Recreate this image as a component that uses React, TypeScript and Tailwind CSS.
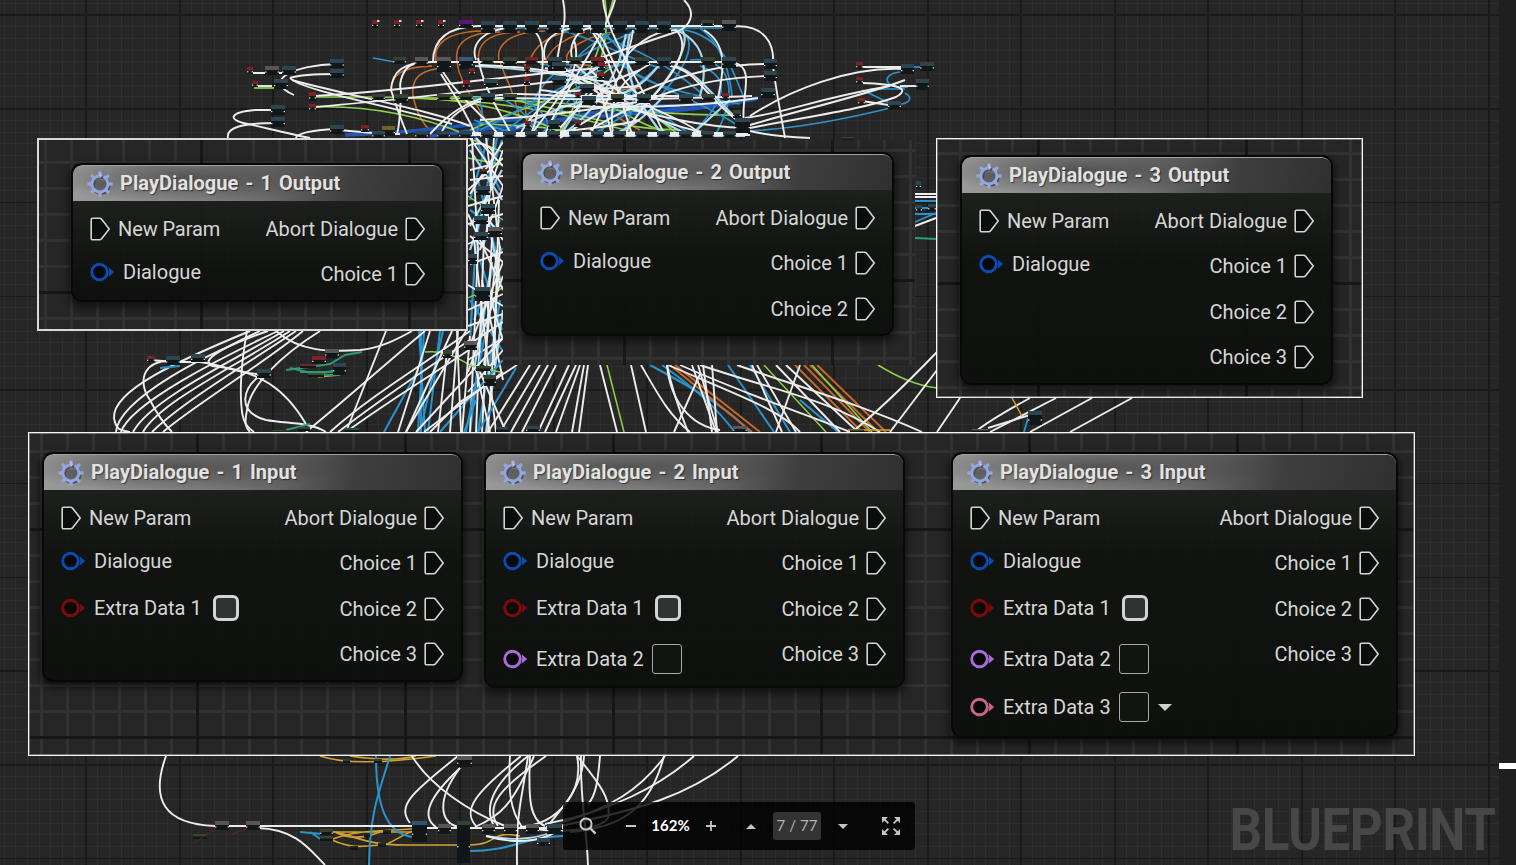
import React from "react";

type Wire = { c: string; w?: number; d: string[] };

const WHITE = "#ededed";
const BLUE = "#2a93cc";
const LIGHT = "#a9d9ee";
const ORANGE = "#c8692a";
const LIME = "#8fd04a";
const YELLOW = "#d3a32f";
const NAVY = "#1f55b5";
const TEAL = "#2f9a76";

const upperWires: Wire[] = [
  {
    c: ORANGE, w: 1.5,
    d: [
      "M436 62 C433 44 446 32 482 31", "M457 62 C454 44 466 32 500 32", "M479 62 C476 46 486 32 520 32",
      "M499 60 C496 46 508 32 545 31", "M530 60 C536 44 550 36 566 32", "M545 62 C552 46 566 38 585 32",
      "M391 92 C391 74 402 67 432 66", "M413 96 C411 78 420 69 446 68", "M457 62 C460 84 472 95 490 128",
      "M500 62 C506 80 514 90 520 120", "M413 96 C416 110 422 124 432 132", "M525 64 C528 84 522 100 528 128",
      "M540 64 L620 66", "M560 130 C580 100 600 90 640 88", "M568 62 C560 50 590 34 620 31", "M600 64 C590 96 600 110 640 130",
    ],
  },
  {
    c: NAVY, w: 3.5,
    d: ["M345 135 C420 132 460 126 520 119", "M430 136 C520 124 590 116 690 108 L756 99", "M470 136 C560 124 600 104 680 106", "M580 118 C640 112 700 112 758 98"],
  },
  {
    c: LIME, w: 1.7,
    d: [
      "M313 97 H378 C420 98 520 98 590 106", "M313 107 C370 105 420 116 465 134", "M405 98 C500 100 560 112 640 134",
      "M605 0 C610 40 600 60 590 100", "M420 98 C470 100 520 112 560 132", "M600 110 C640 110 680 116 740 115",
      "M450 97 C540 92 580 128 680 130", "M580 96 C620 104 640 130 680 134", "M613 0 C605 30 596 66 560 134",
      "M252 73 H285", "M254 88 H275", "M470 130 C540 100 590 90 620 60", "M650 112 L680 136", "M480 124 C540 126 570 130 600 136",
    ],
  },
  {
    c: BLUE, w: 1.7,
    d: [
      "M373 58 L395 62", "M560 30 C600 40 620 56 660 68", "M590 32 C640 50 670 66 700 92", "M610 34 C560 60 560 84 580 110",
      "M660 28 C720 26 730 64 744 98", "M675 30 C700 34 690 64 660 96", "M700 28 C722 44 730 74 732 96",
      "M660 64 C640 84 620 96 600 134", "M690 60 C730 56 740 90 716 134", "M620 64 C660 90 700 100 745 130",
      "M470 96 C490 104 480 120 476 136", "M520 98 C545 110 548 120 552 136", "M500 98 C520 106 530 120 540 136",
      "M560 62 C590 92 580 120 570 136", "M480 130 C560 90 600 60 650 62", "M600 30 C640 60 640 110 620 136",
      "M900 72 C880 74 884 90 908 87", "M862 90 C880 98 890 104 898 106", "M905 93 C915 98 908 105 896 104",
      "M750 131 C800 128 850 118 890 108", "M540 64 C600 70 640 100 690 134", "M640 30 C560 60 540 80 530 110",
      "M700 66 C740 80 716 110 690 136", "M590 66 C560 96 520 116 500 136", "M632 32 C590 70 660 90 740 104",
      "M484 28 H735", "M470 98 H640", "M600 62 L540 136", "M650 100 L590 136", "M474 120 L520 136", "M900 67 H930", "M870 89 H905",
    ],
  },
  {
    c: LIGHT, w: 2.2,
    d: [
      "M475 66 C530 68 560 76 600 80", "M676 30 C700 40 710 60 700 96", "M630 34 C620 70 636 100 662 134",
      "M676 66 C700 74 712 96 740 122", "M682 30 C690 40 680 70 640 110", "M560 136 C600 110 620 70 626 34",
      "M575 64 C600 90 640 110 690 136", "M480 136 H745", "M590 88 L560 136", "M604 100 C640 90 650 76 660 64", "M516 128 L560 108 L600 96",
      "M610 136 C640 124 650 110 664 96", "M730 100 L690 136",
    ],
  },
  {
    c: WHITE, w: 1.9,
    d: [
      "M563 0 C568 24 560 36 557 62", "M603 0 C606 34 640 80 664 134", "M615 0 C606 34 570 80 545 134",
      "M684 0 C696 12 692 26 676 32 C640 44 610 54 590 62", "M728 27 C765 22 775 44 773 66 C776 90 780 110 785 138",
      "M433 62 C433 40 446 27 478 26 H728", "M476 60 C470 44 484 29 510 28", "M438 62 C450 90 478 110 500 136",
      "M478 58 C484 90 500 112 512 136", "M391 90 C392 72 402 62 432 62 H730", "M401 92 C398 82 404 66 414 64",
      "M391 90 C398 112 402 122 407 134", "M401 92 C400 112 400 124 397 134", "M441 74 C456 98 466 112 476 136",
      "M530 28 C546 36 544 62 540 90 C538 112 536 124 530 136", "M545 60 C540 40 556 28 580 28", "M573 60 C568 50 574 30 590 28 C612 60 620 100 632 134",
      "M574 40 C584 70 560 96 530 136", "M592 32 C610 34 606 70 640 96", "M676 30 C650 30 630 50 622 62",
      "M676 30 C690 44 680 68 650 100 C636 116 630 124 624 136", "M633 30 C628 70 600 110 590 136", "M704 30 C728 44 724 70 718 98",
      "M472 62 H600", "M480 65 C560 68 580 80 610 82", "M610 60 C580 80 540 98 520 134",
      "M314 96 C420 90 500 76 600 68", "M314 107 C400 100 500 88 600 76", "M294 95 C260 80 296 65 336 64",
      "M290 78 C296 76 310 74 336 74", "M290 78 C300 90 390 106 452 124", "M292 80 C350 96 430 110 470 126",
      "M277 110 H255 C230 112 226 120 248 124 C270 129 290 134 310 138", "M277 123 C240 123 226 128 228 138", "M336 129 C310 130 296 134 296 138",
      "M340 130 C360 132 380 134 400 134", "M430 134 C470 90 500 92 560 96 H690", "M440 136 C450 110 480 96 510 98",
      "M560 138 C600 110 680 62 770 64", "M590 130 C640 100 690 78 768 76", "M500 98 C600 100 640 100 752 96",
      "M560 106 C620 108 690 108 758 98", "M735 63 C756 68 740 100 744 122", "M670 66 C698 70 706 100 745 126",
      "M480 120 C550 116 590 110 650 100", "M540 90 C600 96 670 126 745 128", "M560 66 C600 90 660 130 720 134",
      "M545 68 C580 76 610 88 630 110", "M614 138 C606 100 620 80 650 64", "M700 134 C690 120 620 100 590 70",
      "M750 116 C790 90 850 66 905 69", "M750 125 C800 110 870 94 905 80", "M750 128 C810 116 860 110 896 97 C912 88 896 84 862 83",
      "M862 67 H905", "M862 101 L895 106", "M900 86 H920", "M745 118 C790 112 810 100 890 86",
      "M750 131 C770 136 790 137 810 138", "M640 120 C600 130 560 130 520 136", "M470 135 H750", "M590 90 L640 70", "M598 86 L560 128", "M600 88 L612 136",
      "M252 73 H285", "M254 86 H272", "M575 82 L630 98", "M470 133 H748", "M574 78 L600 94 L574 108", "M560 92 L640 86",
    ],
  },
];

const stripWires: Wire[] = [
  {
    c: BLUE, w: 2.2,
    d: [
      "M488 138 L470 200", "M497 138 L476 240 L470 340", "M475 138 L500 190", "M500 220 L470 262", "M478 180 L498 260", "M502 248 L474 320",
      "M486 300 L470 432", "M500 300 L478 432", "M470 210 L502 232", "M480 260 L502 330", "M470 300 L502 350", "M492 170 L502 140",
    ],
  },
  { c: LIME, w: 1.4, d: ["M468 138 L503 152", "M468 158 L503 165", "M468 298 C480 290 496 298 503 286", "M468 196 L503 220"] },
  { c: LIGHT, w: 2.2, d: ["M470 150 L502 200", "M502 170 L470 226", "M484 200 L500 280", "M492 262 L474 370", "M503 310 L486 432", "M470 250 L490 190"] },
  {
    c: WHITE, w: 1.9,
    d: [
      "M468 146 C482 138 502 150 490 165 L470 170", "M503 142 L470 194", "M470 138 L503 186", "M470 180 L503 176", "M503 150 L482 210 L503 240",
      "M468 206 L503 196", "M468 224 L503 214", "M470 236 L503 262", "M470 264 L503 252", "M478 250 L470 432", "M484 240 L476 432", "M492 238 L482 432",
      "M500 246 L488 432", "M503 262 L468 350", "M503 276 L468 372", "M468 285 L503 306", "M468 310 L503 294", "M468 326 L503 314", "M474 240 L496 432",
      "M482 280 L503 380", "M468 345 L503 322", "M468 360 L503 338", "M472 138 L478 250", "M494 138 L486 240", "M499 200 L494 365", "M503 350 L468 392", "M486 138 L500 250", "M468 214 L503 290",
      "M468 190 L503 158", "M468 244 L503 228", "M476 138 L503 166", "M503 186 L480 250", "M497 250 L484 365", "M488 290 L503 340",
    ],
  },
];

const lowerWires: Wire[] = [
  {
    c: BLUE, w: 2,
    d: [
      "M419 331 L425 432", "M424 331 L418 432", "M440 331 L428 432", "M443 331 L420 432", "M418 370 L384 432", "M484 340 L466 432", "M516 368 L478 432", "M476 400 L464 432",
      "M650 365 C700 392 730 410 750 432", "M662 365 C700 392 716 408 735 432", "M728 365 L774 432", "M750 365 L790 432", "M503 360 L440 432", "M800 400 L838 432", "M421 331 L421 432",
    ],
  },
  { c: ORANGE, w: 1.8, d: ["M670 365 L752 432", "M675 365 L760 432", "M804 365 L870 432", "M810 365 L878 432", "M817 365 L886 432", "M795 365 L862 432"] },
  { c: LIME, w: 1.5, d: ["M607 365 L624 432", "M878 365 C896 376 914 385 937 388", "M764 365 L826 432", "M812 365 L872 432", "M425 352 C448 350 456 358 472 366 L500 372"] },
  {
    c: WHITE, w: 1.9,
    d: [
      "M250 331 C180 360 112 390 114 418 C116 430 120 430 130 432", "M268 331 C210 350 118 400 116 432", "M278 331 C220 358 130 404 121 432", "M284 331 C230 362 150 400 133 432",
      "M290 331 C236 366 160 402 143 432", "M296 331 C250 362 182 402 152 432", "M303 331 C260 366 196 404 163 432", "M320 331 C280 356 250 386 247 410 C244 424 246 428 250 432",
      "M180 362 C144 356 136 380 150 400 C156 412 164 424 172 432", "M150 360 L175 362 H200 C220 364 238 374 260 374",
      "M260 331 C220 350 200 360 212 366 C260 370 286 390 306 424", "M247 331 C240 370 240 396 242 412 C244 424 248 428 254 432", "M262 374 C242 388 236 412 266 420 C290 424 310 422 326 432",
      "M276 331 C300 352 330 352 360 350 C380 348 396 340 412 331", "M386 331 L346 432", "M425 331 C390 360 350 396 306 432", "M470 331 C430 360 370 396 330 432",
      "M470 340 C430 366 380 400 338 432", "M475 346 C430 376 390 400 346 432", "M430 331 L398 432", "M452 331 L406 432", "M466 331 L406 432",
      "M447 352 L438 432", "M458 331 L450 432", "M457 331 L461 432", "M470 336 L462 432", "M503 338 L416 432", "M503 372 L424 432", "M476 370 L490 432", "M480 372 L506 432",
      "M517 365 L460 402 L430 432", "M530 365 L488 432", "M540 365 L500 432", "M548 365 L511 432", "M556 365 L522 432", "M569 365 L538 432", "M576 365 L545 432", "M580 365 L556 432", "M584 365 L572 432",
      "M588 365 L579 432", "M600 365 L617 432", "M631 365 L646 432", "M641 365 C660 398 670 416 690 432", "M667 365 C670 400 690 426 720 430", "M667 365 C672 390 680 412 688 432", "M692 365 L716 432", "M698 365 L718 432",
      "M703 365 L712 432", "M712 365 L717 432", "M700 374 L674 432", "M668 365 C740 396 780 410 800 432", "M680 365 C760 400 800 412 850 432", "M700 365 C780 392 830 400 880 432",
      "M752 365 L782 432", "M757 365 L796 432", "M776 365 L840 432", "M786 365 L858 432", "M800 365 L776 432", "M737 365 C790 384 860 404 922 432", "M937 352 C910 380 880 410 852 432", "M937 370 L890 432",
      "M960 398 L937 432", "M1030 398 C1008 410 990 420 975 432", "M1056 398 L990 432", "M1092 398 L1030 432", "M1132 398 L1070 432", "M988 428 L1030 415",
      "M915 194 H936 M915 197 H936", "M915 226 L936 218",
    ],
  },
  { c: BLUE, w: 1.8, d: ["M160 368 L180 366", "M915 201 H936 M915 208 H936 M915 214 H936 M915 222 L936 213", "M1028 418 L1024 432"] },
  { c: YELLOW, w: 1.5, d: ["M1012 398 L1022 416", "M848 430 H890", "M318 377 L340 375"] },
  { c: TEAL, w: 2, d: ["M286 370 L330 364 L345 355 L362 352", "M300 372 H340", "M310 376 L345 368", "M290 368 L320 375 H340", "M286 430 L310 424", "M915 238 L936 239"] },
];

const bottomWires: Wire[] = [
  {
    c: YELLOW, w: 1.6,
    d: [
      "M320 756 C344 764 380 764 436 756", "M350 756 C376 760 400 760 416 756", "M328 831 C350 832 360 846 410 845 H470 C500 844 490 830 520 836", "M320 832 H420 M330 840 C360 828 390 832 420 828",
      "M332 840 C350 848 360 847 380 845", "M385 845 C400 838 410 830 420 829", "M335 832 C350 840 365 838 380 832",
    ],
  },
  { c: BLUE, w: 2, d: ["M376 756 C376 800 384 836 415 837", "M390 756 C380 790 370 810 369 865", "M300 832 L322 834 M310 832 L322 840", "M466 851 C510 852 520 838 563 836"] },
  { c: LIGHT, w: 1.8, d: ["M415 828 H563", "M486 836 C520 842 540 838 563 828"] },
  {
    c: WHITE, w: 1.9,
    d: [
      "M166 756 C150 800 164 824 215 826 H420", "M258 828 C296 829 310 850 325 865", "M412 756 C430 786 470 812 505 826",
      "M458 756 C410 794 397 806 410 823", "M460 768 C430 796 420 816 436 827", "M460 768 C436 800 440 822 458 827", "M521 756 C474 794 462 810 476 826", "M528 756 C490 786 484 808 494 826",
      "M546 756 C500 788 484 806 498 826", "M510 756 C508 790 510 810 522 827", "M528 756 C522 800 516 810 517 865", "M530 756 C528 800 530 820 545 826",
      "M534 756 C512 806 500 816 475 827", "M577 756 C584 790 560 824 520 827", "M581 756 C580 800 586 820 588 865", "M584 756 C582 790 560 810 546 828", "M577 756 C600 784 612 800 608 818 C600 830 560 834 530 828",
      "M600 756 C598 780 596 796 588 804", "M665 756 C640 790 610 808 563 822", "M664 756 C650 810 620 828 570 832", "M694 756 C660 786 610 812 545 824", "M738 756 C690 796 640 810 550 828", "M420 828 H563", "M486 836 C520 846 550 840 563 826",
    ],
  },
];

const TEALBOX = "#2d4550";
const GREENBOX = "#34452f";
const REDBOX = "#7a2226";
const GREYBOX = "#5b5558";

const boxes: [number, number, number, number, string][] = [
  [372, 20, 6, 8, REDBOX], [394, 20, 6, 8, REDBOX], [416, 20, 6, 8, REDBOX], [438, 20, 6, 8, REDBOX],
  [459, 20, 14, 8, "#5b1673"],
  ...[481, 503, 525, 547, 569, 591, 613, 635, 657].map((x): [number, number, number, number, string] => [x, 21, 14, 12, TEALBOX]),
  [701, 20, 13, 6, GREENBOX], [722, 20, 14, 11, GREYBOX],
  [393, 57, 13, 7, GREENBOX], [415, 57, 13, 9, GREYBOX], [437, 57, 14, 15, GREYBOX], [459, 57, 14, 12, "#355b80"],
  [481, 57, 13, 7, GREENBOX], [503, 57, 14, 9, GREENBOX], [525, 57, 13, 7, REDBOX], [548, 57, 14, 14, TEALBOX], [569, 57, 13, 7, GREENBOX],
  [591, 57, 13, 9, REDBOX], [635, 57, 14, 8, GREENBOX], [657, 57, 14, 9, TEALBOX], [701, 57, 14, 8, GREENBOX], [722, 57, 14, 11, TEALBOX],
  [372, 94, 13, 6, GREENBOX], [394, 94, 14, 9, GREENBOX], [437, 94, 14, 6, GREENBOX], [459, 94, 14, 6, GREENBOX], [481, 93, 14, 9, TEALBOX], [503, 94, 14, 6, GREENBOX],
  [463, 80, 7, 9, REDBOX], [469, 68, 6, 7, REDBOX], [524, 66, 6, 6, REDBOX], [524, 77, 6, 8, REDBOX], [484, 79, 14, 8, TEALBOX], [552, 62, 14, 9, TEALBOX], [552, 76, 14, 9, TEALBOX], [580, 84, 14, 9, TEALBOX], [582, 96, 14, 9, TEALBOX], [598, 62, 7, 8, REDBOX], [597, 72, 7, 8, REDBOX], [611, 94, 13, 8, GREENBOX], [637, 94, 14, 9, TEALBOX], [679, 94, 14, 9, TEALBOX], [702, 94, 13, 7, GREENBOX], [722, 93, 7, 7, REDBOX], [733, 110, 8, 8, GREENBOX],
  [764, 59, 13, 10, TEALBOX], [764, 71, 13, 10, TEALBOX], [761, 88, 14, 10, TEALBOX], [735, 118, 15, 15, TEALBOX], [575, 92, 6, 6, REDBOX],
  [330, 59, 14, 9, TEALBOX], [330, 69, 14, 9, TEALBOX], [247, 67, 6, 7, REDBOX], [265, 66, 14, 9, GREYBOX], [282, 66, 14, 9, TEALBOX], [252, 81, 6, 6, REDBOX], [274, 79, 14, 10, TEALBOX],
  [309, 92, 7, 9, REDBOX], [309, 104, 7, 7, REDBOX], [271, 105, 14, 10, TEALBOX], [271, 117, 14, 10, TEALBOX], [330, 125, 14, 9, TEALBOX], [361, 125, 8, 7, REDBOX], [382, 126, 13, 10, "#6d6428"],
  ...[372, 415, 437, 459, 481, 503, 525, 547, 569, 591, 613, 635, 657, 679, 701, 723].map((x): [number, number, number, number, string] => [x, 131, 13, 7, TEALBOX]),
  [525, 121, 6, 7, REDBOX], [548, 120, 12, 9, TEALBOX], [574, 120, 7, 7, REDBOX],
  [856, 62, 7, 7, REDBOX], [856, 77, 7, 7, REDBOX], [858, 98, 7, 7, REDBOX], [901, 64, 13, 10, TEALBOX], [920, 62, 14, 9, TEALBOX], [916, 79, 13, 11, TEALBOX], [888, 101, 13, 8, TEALBOX], [841, 137, 14, 3, TEALBOX],
  [481, 169, 6, 5, REDBOX], [476, 186, 14, 9, TEALBOX], [481, 204, 14, 10, TEALBOX], [474, 216, 14, 8, TEALBOX], [488, 227, 14, 10, GREYBOX], [474, 232, 14, 8, TEALBOX], [468, 254, 9, 10, TEALBOX], [475, 287, 15, 14, TEALBOX], [464, 341, 13, 9, GREYBOX], [484, 375, 12, 11, GREENBOX], [476, 366, 14, 5, GREENBOX],
  [147, 356, 8, 6, REDBOX], [166, 356, 14, 9, TEALBOX], [191, 354, 14, 8, TEALBOX], [257, 369, 14, 9, TEALBOX], [325, 349, 14, 9, GREYBOX], [312, 356, 14, 8, REDBOX], [300, 364, 16, 4, REDBOX], [333, 363, 13, 12, TEALBOX], [308, 373, 16, 4, "#33512e"], [443, 350, 9, 8, GREENBOX],
  [272, 430, 16, 3, GREENBOX], [345, 428, 14, 4, TEALBOX], [298, 427, 12, 4, GREENBOX], [496, 427, 12, 5, TEALBOX], [526, 426, 14, 6, TEALBOX], [733, 426, 14, 6, GREYBOX], [850, 429, 14, 3, "#7b6a22"], [1028, 411, 14, 14, TEALBOX], [972, 429, 16, 3, GREYBOX],
  [916, 181, 5, 8, TEALBOX], [916, 205, 6, 7, TEALBOX], [928, 204, 8, 7, TEALBOX],
  [457, 756, 15, 11, GREYBOX], [343, 759, 7, 4, "#3a3a2a"], [374, 759, 8, 4, "#3a3a2a"],
  [215, 821, 14, 9, GREYBOX], [246, 821, 14, 9, GREYBOX], [193, 834, 14, 5, GREENBOX], [320, 829, 13, 6, GREENBOX], [320, 836, 13, 5, GREENBOX], [412, 821, 15, 21, "#31536b"], [438, 824, 13, 10, GREYBOX], [457, 821, 13, 42, GREENBOX], [482, 824, 13, 10, GREYBOX], [504, 824, 13, 10, GREYBOX], [526, 824, 13, 10, GREYBOX], [547, 824, 15, 10, TEALBOX], [537, 838, 13, 8, TEALBOX], [350, 846, 8, 4, "#222"], [378, 843, 8, 4, "#222"], [383, 830, 8, 4, "#222"], [364, 834, 6, 3, "#222"],
];

function Wires({ groups }: { groups: Wire[] }) {
  return (
    <>
      {groups.map((g, i) => (
        <g key={i} stroke={g.c} strokeWidth={g.w ?? 1.6} fill="none">
          {g.d.map((d, j) => <path key={j} d={d} />)}
        </g>
      ))}
    </>
  );
}

function Graph() {
  return (
    <svg className="absolute inset-0" width="1499" height="865" viewBox="0 0 1499 865">
      <Wires groups={upperWires} />
      <Wires groups={stripWires} />
      <Wires groups={lowerWires} />
      <Wires groups={bottomWires} />
      {boxes.map(([x, y, w, h, c], i) => (
        <g key={i}>
          <rect x={x} y={y} width={w} height={h} fill="#111618" />
          <rect x={x} y={y} width={w} height={Math.min(h * 0.5, 4)} fill={c} />
          {h > 5 && <rect x={x} y={y + h * 0.6} width="1.4" height="1.2" fill="#ddd" />}
          {h > 5 && <rect x={x + w - 1.4} y={y + h * 0.6} width="1.4" height="1.2" fill="#ddd" />}
        </g>
      ))}
      <g fill="#d8d8d8">
        {[377, 399, 421, 443].map((x) => <rect key={x} x={x} y="20" width="2.5" height="2" />)}
      </g>
      <path d="M194 843 L215 829 M232 834 L247 829" stroke="#6e1d1d" fill="none" />
    </svg>
  );
}

function Gear() {
  return (
    <svg width="28" height="28" viewBox="-14 -14 28 28" className="shrink-0">
      <ellipse cx="1" cy="3" rx="8" ry="7" fill="#2b2b2b" opacity=".4" />
      <g transform="translate(1.2 1.6)" stroke="#333" strokeOpacity=".6" fill="none">
        <circle r="8" strokeWidth="3" />
      </g>
      <g fill="#93a6e0">
        {[0, 45, 90, 135, 180, 225, 270, 315].map((a) => (
          <path key={a} d="M-2 -8 L-1.4 -12.6 H1.4 L2 -8 Z" transform={`rotate(${a})`} />
        ))}
      </g>
      <path d="M-1.4 -7.9 A8 8 0 1 0 3.4 -7.2" fill="none" stroke="#93a6e0" strokeWidth="2.8" />
      <path d="M-.6 -12.6 V-5.4 L2 -8" fill="#b7c5f4" />
    </svg>
  );
}

function ExecPin() {
  return (
    <svg width="21" height="24" viewBox="0 0 21 24" className="shrink-0">
      <path d="M2.6 1.2 H9.6 Q10.8 1.2 11.6 2.2 L19.2 12 L11.6 21.8 Q10.8 22.8 9.6 22.8 H2.6 Q1.2 22.8 1.2 21.4 V2.6 Q1.2 1.2 2.6 1.2 Z" fill="#0b0d0c" stroke="#d4d4d4" strokeWidth="1.6" />
    </svg>
  );
}

function DataPin({ color }: { color: string }) {
  return (
    <svg width="26" height="20" viewBox="0 0 26 20" className="shrink-0">
      <circle cx="9.5" cy="10" r="7.8" fill="#070908" stroke={color} strokeWidth="2.9" />
      <path d="M18.6 5.2 L24.2 10 L18.6 14.8 Q19.8 10 18.6 5.2 Z" fill={color} />
    </svg>
  );
}

type Extra = "check" | "box" | "menu";
const extraPins: { color: string; kind: Extra; row: string }[] = [
  { color: "#800a0b", kind: "check", row: "h-[51px]" },
  { color: "#ab6cda", kind: "box", row: "h-[51px]" },
  { color: "#c6668c", kind: "menu", row: "h-[46px]" },
];

function Node({ title, place, extras = 0, choices }: { title: string; place: string; extras?: number; choices: number }) {
  return (
    <section className={`absolute flex flex-col overflow-hidden rounded-[11px] border-2 border-[#080808] bg-[linear-gradient(180deg,rgba(28,31,28,0.93)_36px,rgba(15,18,15,0.94)_100px,rgba(13,15,13,0.95)_100%)] text-[20px] leading-none text-[#d6d6d6] shadow-[0_4px_9px_2px_rgba(0,0,0,0.55)] ${place}`}>
      <header className="flex h-[36px] shrink-0 items-center gap-[6px] rounded-t-[9px] border-t border-[#a0a0a0] bg-[radial-gradient(ellipse_40%_70%_at_32%_35%,rgba(40,40,40,0.55),transparent),linear-gradient(100deg,#9a9a9a_0%,#828282_38%,#6a6a6a_54%,#3f3f3f_74%,#303030_100%)] pl-[13px]">
        <Gear />
        <h2 className="whitespace-pre pb-[2px] text-[20px] font-bold tracking-[0.05px] text-[#e2e2e2] [text-shadow:1px_1px_1px_rgba(0,0,0,0.5)] [word-spacing:2px]">{title}</h2>
      </header>
      <div className="flex justify-between pl-[17px] pr-[16px]">
        <div className="flex flex-col pt-[6px]">
          <div className="flex h-[43px] items-center gap-[7px]"><ExecPin /><span className="tracking-[-0.1px]">New Param</span></div>
          <div className="flex h-[43px] items-center gap-[7px]"><DataPin color="#0a4cb2" /><span>Dialogue</span></div>
          {extraPins.slice(0, extras).map((p, i) => (
            <div key={i} className={`flex items-center ${p.row}`}>
              <DataPin color={p.color} />
              <span className="ml-[7px] w-[108px]">Extra Data {i + 1}</span>
              {p.kind === "check" ? (
                <span className="ml-[11px] size-[26px] rounded-[6px] border-[3.5px] border-[#d4d4d4] bg-[#303331]" />
              ) : (
                <span className="ml-[8px] size-[30px] rounded-[3px] border-[1.5px] border-[#a9a9a9] bg-[#121412]" />
              )}
              {p.kind === "menu" && (
                <span className="ml-[9px] border-x-[7px] border-t-[7px] border-x-transparent border-t-[#cfcfcf]" />
              )}
            </div>
          ))}
        </div>
        <div className="flex flex-col items-end pt-[5px]">
          <div className="flex h-[45.5px] items-center gap-[7px]"><span>Abort Dialogue</span><ExecPin /></div>
          {Array.from({ length: choices }, (_, i) => (
            <div key={i} className="flex h-[45.5px] items-center gap-[7px]"><span>Choice {i + 1}</span><ExecPin /></div>
          ))}
        </div>
      </div>
    </section>
  );
}

function Board({ place, children }: { place: string; children: React.ReactNode }) {
  return (
    <div className={`absolute bg-[#262626] bg-[image:linear-gradient(90deg,#171717_3px,transparent_3px),linear-gradient(180deg,#171717_3px,transparent_3px),linear-gradient(90deg,#323232_3px,transparent_3px),linear-gradient(180deg,#323232_3px,transparent_3px)] bg-[size:208px_208px,208px_208px,26px_26px,26px_26px] ${place}`}>
      {children}
    </div>
  );
}

function Toolbar() {
  return (
    <div className="absolute left-[563px] top-[802px] flex h-[48px] w-[352px] items-center rounded-[3px] bg-black/80 font-['Lato',sans-serif] text-[16px] text-[#c4c4c4]">
      <button className="flex w-[49px] justify-center">
        <svg width="18" height="18" viewBox="0 0 18 18" fill="none" stroke="#c8c8c8">
          <circle cx="7" cy="7" r="5.6" strokeWidth="2" />
          <path d="M11 11 L16.6 16.6" strokeWidth="2.4" />
        </svg>
      </button>
      <button className="flex w-[38px] justify-center"><span className="h-[2px] w-[10px] bg-[#c4c4c4]" /></button>
      <span className="w-[41px] pb-px text-center text-[15px] font-bold text-white">162%</span>
      <button className="flex w-[40px] justify-center">
        <svg width="10" height="10" viewBox="0 0 10 10"><path d="M5 0 V10 M0 5 H10" stroke="#c4c4c4" strokeWidth="1.8" /></svg>
      </button>
      <button className="flex w-[40px] justify-center"><span className="border-x-[5px] border-b-[5px] border-x-transparent border-b-[#c4c4c4]" /></button>
      <span className="mx-[2px] flex h-[28px] w-[48px] items-center justify-center rounded-[3px] bg-[#333] pb-px text-[15px] tracking-[0.1px] text-[#b2b2b2]">7 / 77</span>
      <button className="flex w-[40px] justify-center"><span className="mt-px border-x-[5px] border-t-[5px] border-x-transparent border-t-[#c4c4c4]" /></button>
      <button className="flex w-[52px] justify-center pl-[4px]">
        <svg width="18" height="18" viewBox="0 0 18 18" fill="#c4c4c4" stroke="#c4c4c4" strokeWidth="1.8">
          {[0, 90, 180, 270].map((a) => (
            <g key={a} transform={`rotate(${a} 9 9)`}>
              <path d="M0 0 H6 L0 6 Z" stroke="none" />
              <path d="M2 2 L6.4 6.4" />
            </g>
          ))}
        </svg>
      </button>
    </div>
  );
}

export default function App() {
  return (
    <main className="relative h-[865px] w-full overflow-hidden bg-[#262626] font-['Roboto',sans-serif]">
      <div className="absolute inset-0 bg-[image:repeating-linear-gradient(90deg,#1a1a1a_-8px,#1a1a1a_-6.5px,transparent_-6.5px,transparent_85.5px),repeating-linear-gradient(180deg,#1a1a1a_-79.2px,#1a1a1a_-77.7px,transparent_-77.7px,transparent_14.5px),repeating-linear-gradient(90deg,#2e2e2e_-8px,#2e2e2e_-7px,transparent_-7px,transparent_3.6875px),repeating-linear-gradient(180deg,#2d2d2d_-8.925px,#2d2d2d_-7.925px,transparent_-7.925px,transparent_2.7875px)]" />
      <Graph />
      <div className="absolute inset-0 flex items-end justify-end pb-[1px] pr-[20px]">
        <span className="origin-right scale-x-[0.868] text-[59px] font-bold leading-[69px] tracking-[-0.5px] text-[#474747]">BLUEPRINT</span>
      </div>
      <aside className="absolute inset-y-0 right-0 w-[17px] bg-[#1f1f1f] pt-[763px]">
        <div className="h-[6px] bg-white" />
      </aside>

      <Board place="left-[37px] top-[138px] h-[193px] w-[431px] border-2 border-[#d8d8d8] bg-[position:161px_151px]">
        <Node title="PlayDialogue - 1 Output" place="left-[32px] top-[23px] h-[139px] w-[373px]" choices={1} />
      </Board>
      <Board place="left-[503px] top-[140px] h-[225px] w-[412px] bg-[position:120px_139px]">
        <Node title="PlayDialogue - 2 Output" place="left-[18px] top-[12px] h-[184px] w-[373px]" choices={2} />
      </Board>
      <Board place="left-[936px] top-[138px] h-[260px] w-[427px] border border-[#f4f4f4] bg-[position:100px_143px] shadow-[inset_0_0_0_1px_rgba(255,255,255,0.35)]">
        <Node title="PlayDialogue - 3 Output" place="left-[23px] top-[16px] h-[230px] w-[373px]" choices={3} />
      </Board>
      <Board place="left-[28px] top-[432px] h-[324px] w-[1387px] border border-[#f4f4f4] bg-[position:167px_95px] shadow-[inset_0_0_0_1px_rgba(255,255,255,0.35)]">
        <Node title="PlayDialogue - 1 Input" place="left-[13px] top-[19px] h-[230px] w-[421px]" extras={1} choices={3} />
        <Node title="PlayDialogue - 2 Input" place="left-[455px] top-[19px] h-[236px] w-[421px]" extras={2} choices={3} />
        <Node title="PlayDialogue - 3 Input" place="left-[922px] top-[19px] h-[286px] w-[447px]" extras={3} choices={3} />
      </Board>
      <Toolbar />
    </main>
  );
}
